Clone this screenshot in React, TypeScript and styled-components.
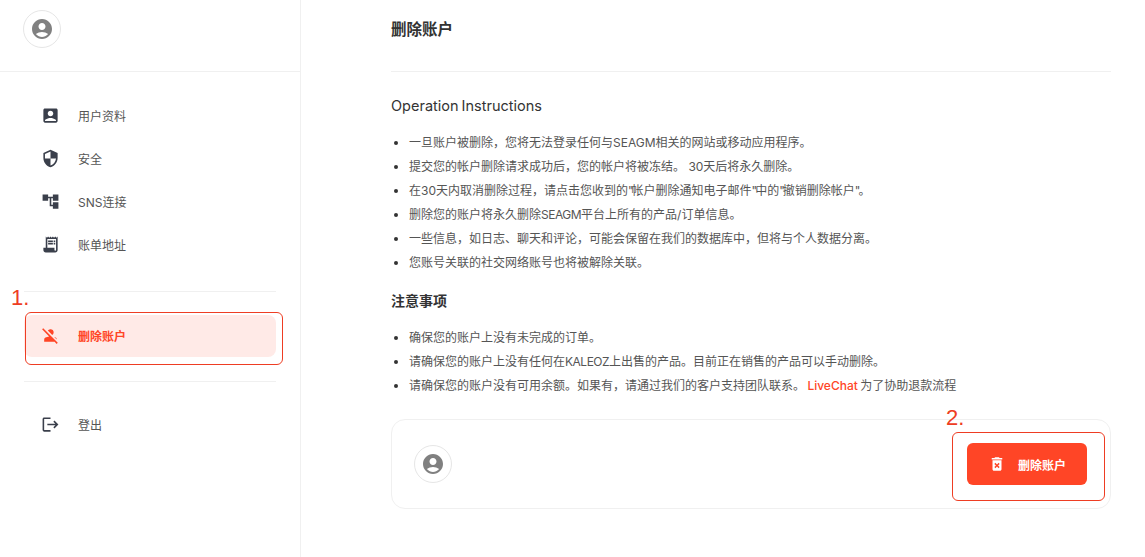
import React from 'react'
import styled, { createGlobalStyle } from 'styled-components'
import { MdAccountBox, MdAccountCircle, MdAccountTree, MdDeleteForever, MdLogout, MdPersonOff, MdReceiptLong, MdSecurity } from 'react-icons/md'

const GlobalStyle = createGlobalStyle`
  html, body { margin: 0; padding: 0; background: #fff; }
  body {
    font-family: Inter, "Noto Sans CJK SC", sans-serif;
    color: #333;
    overflow: hidden;
  }
`

const Page = styled.div`
  position: relative;
  width: 1145px;
  height: 557px;
  display: flex;
  overflow: hidden;
`

const Sidebar = styled.aside`
  width: 301px;
  box-sizing: border-box;
  flex: none;
  border-right: 1px solid #f0f0f0;
`

const SideHead = styled.div`
  height: 72px;
  box-sizing: border-box;
  padding: 10px 23px 0;
  border-bottom: 1px solid #f0f0f0;
`

const Avatar = styled.div`
  width: 38px;
  height: 38px;
  box-sizing: border-box;
  border: 1px solid #e6e6e6;
  border-radius: 50%;
  display: flex;
  align-items: center;
  justify-content: center;
  color: #808080;
  font-size: 24px;
  background: #fff;
`

const Nav = styled.nav`
  padding: 22px 24px 0;
`

const NavItem = styled.a<{ $active?: boolean }>`
  height: ${(p) => (p.$active ? 42 : 43)}px;
  box-sizing: border-box;
  display: flex;
  align-items: center;
  gap: 18px;
  padding-left: 17px;
  padding-bottom: ${(p) => (p.$active ? 1 : 0)}px;
  border-radius: 8px;
  font-size: 12px;
  font-weight: ${(p) => (p.$active ? 600 : 400)};
  color: ${(p) => (p.$active ? '#ff4526' : '#555')};
  background: ${(p) => (p.$active ? '#ffeae7' : 'transparent')};
  svg {
    font-size: 19px;
    flex: none;
    color: ${(p) => (p.$active ? '#ff4526' : '#3a3f4b')};
  }
`

const ActiveGroup = styled.div`
  margin-top: 25px;
  padding: 23px 0 24px;
  border-top: 1px solid #f0f0f0;
  border-bottom: 1px solid #f0f0f0;
`

const LogoutGroup = styled.div`
  padding-top: 21px;
`

const Main = styled.main`
  width: 720px;
  margin-left: 90px;
`

const TitleBar = styled.div`
  height: 72px;
  box-sizing: border-box;
  padding-top: 19px;
  border-bottom: 1px solid #f0f0f0;
  font-size: 15.5px;
  line-height: 22px;
  font-weight: 700;
  color: #333;
`

const Heading = styled.h3`
  margin: 0;
  font-size: 14.5px;
  line-height: 22px;
  font-weight: 400;
  word-spacing: -1px;
  color: #333;
`

const FirstHeading = styled(Heading)`
  padding-top: 23px;
`

const BoldHeading = styled(Heading)`
  font-size: 14px;
  font-weight: 700;
  padding-top: 15px;
`

const List = styled.ul`
  margin: 14px 0 0;
  padding: 0 0 0 18px;
  list-style: disc;
`

const Item = styled.li`
  font-size: 12px;
  line-height: 24px;
  color: #555;
  &::marker { color: #333; }
`

const Quote = styled.span`
  letter-spacing: -2px;
`

const Latin = styled.span`
  letter-spacing: -0.5px;
`

const Red = styled.span`
  color: #ff4526;
  font-weight: 500;
  margin: 0 -1px;
`

const Card = styled.section`
  margin-top: 21px;
  height: 90px;
  box-sizing: border-box;
  border: 1px solid #f0f0f0;
  border-radius: 14px;
  padding: 0 23px 0 22px;
  display: flex;
  align-items: center;
  justify-content: space-between;
`

const DeleteButton = styled.button`
  width: 120px;
  height: 42px;
  border: none;
  border-radius: 6px;
  background: #ff4526;
  color: #fff;
  font-family: inherit;
  font-size: 12px;
  font-weight: 700;
  display: flex;
  align-items: center;
  justify-content: center;
  gap: 12px;
  padding: 0;
  svg { font-size: 18px; }
`

const Mark = styled.div<{ $x: number; $y: number; $w: number; $h: number }>`
  position: absolute;
  left: ${(p) => p.$x}px;
  top: ${(p) => p.$y}px;
  width: ${(p) => p.$w}px;
  height: ${(p) => p.$h}px;
  box-sizing: border-box;
  border: 1px solid #ee3d23;
  border-radius: 6px;
  pointer-events: none;
`

const MarkLabel = styled.span<{ $x: number; $y: number }>`
  position: absolute;
  left: ${(p) => p.$x}px;
  top: ${(p) => p.$y}px;
  font-family: "Liberation Sans", sans-serif;
  font-size: 22px;
  line-height: 24px;
  color: #ee3d23;
`

export default function App() {
  return (
    <Page>
      <GlobalStyle />
      <Sidebar>
        <SideHead>
          <Avatar><MdAccountCircle /></Avatar>
        </SideHead>
        <Nav>
          <NavItem><MdAccountBox />用户资料</NavItem>
          <NavItem><MdSecurity />安全</NavItem>
          <NavItem><MdAccountTree />SNS连接</NavItem>
          <NavItem><MdReceiptLong />账单地址</NavItem>
          <ActiveGroup>
            <NavItem $active><MdPersonOff />删除账户</NavItem>
          </ActiveGroup>
          <LogoutGroup>
            <NavItem><MdLogout />登出</NavItem>
          </LogoutGroup>
        </Nav>
      </Sidebar>
      <Main>
        <TitleBar>删除账户</TitleBar>
        <FirstHeading>Operation Instructions</FirstHeading>
        <List>
          <Item>一旦账户被删除，您将无法登录任何与SEAGM相关的网站或移动应用程序。</Item>
          <Item>提交您的帐户删除请求成功后，您的帐户将被冻结。 30天后将永久删除。</Item>
          <Item>在30天内取消删除过程，请点击您收到的<Quote>"</Quote>帐户删除通知电子邮件<Quote>"</Quote>中的<Quote>"</Quote>撤销删除帐户<Quote>"</Quote>。</Item>
          <Item>删除您的账户将永久删除<Latin>SEAGM</Latin>平台上所有的产品/订单信息。</Item>
          <Item>一些信息，如日志、聊天和评论，可能会保留在我们的数据库中，但将与个人数据分离。</Item>
          <Item>您账号关联的社交网络账号也将被解除关联。</Item>
        </List>
        <BoldHeading>注意事项</BoldHeading>
        <List>
          <Item>确保您的账户上没有未完成的订单。</Item>
          <Item>请确保您的账户上没有任何在<Latin>KALEOZ</Latin>上出售的产品。目前正在销售的产品可以手动删除。</Item>
          <Item>请确保您的账户没有可用余额。如果有，请通过我们的客户支持团队联系。 <Red>LiveChat</Red> 为了协助退款流程</Item>
        </List>
        <Card>
          <Avatar><MdAccountCircle /></Avatar>
          <DeleteButton><MdDeleteForever />删除账户</DeleteButton>
        </Card>
      </Main>
      <Mark $x={25} $y={312} $w={258} $h={53} />
      <MarkLabel $x={11} $y={286}>1.</MarkLabel>
      <Mark $x={952} $y={432} $w={153} $h={69} />
      <MarkLabel $x={946} $y={406}>2.</MarkLabel>
    </Page>
  )
}
